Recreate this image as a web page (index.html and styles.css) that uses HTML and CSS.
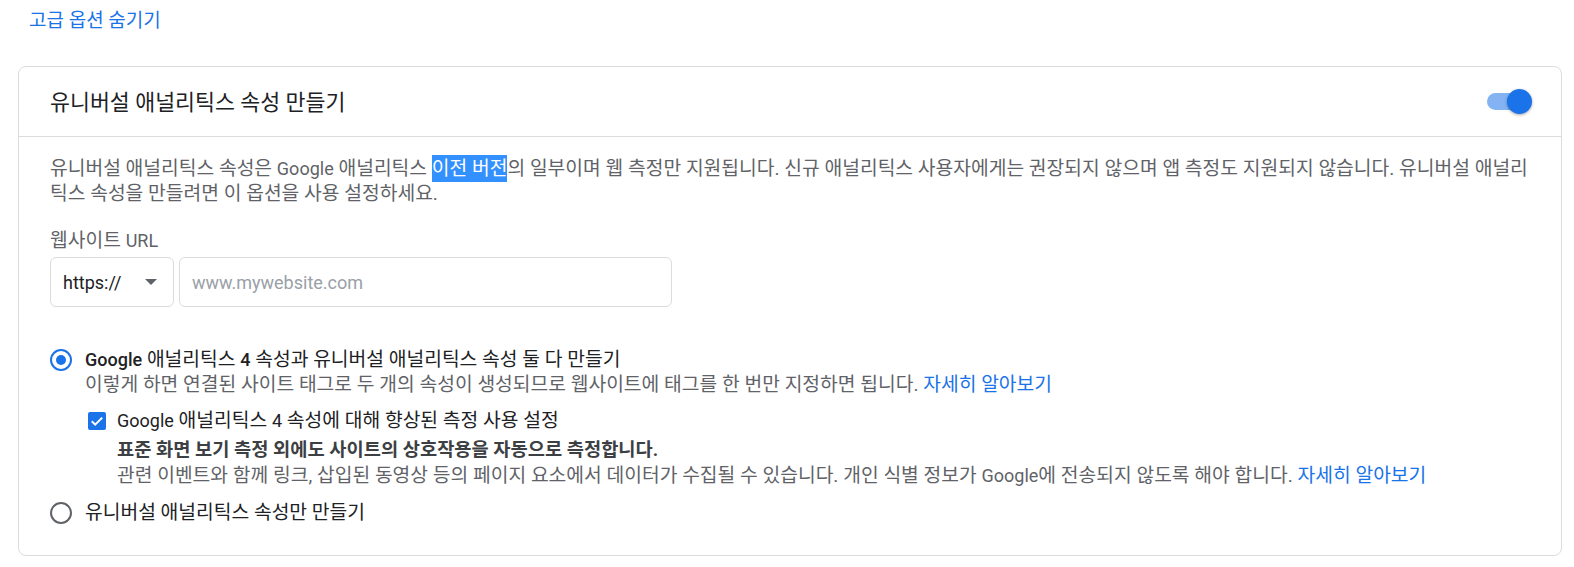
FILE: index.html
```html
<!DOCTYPE html>
<html lang="ko">
<head>
    <meta charset="UTF-8">
    <meta name="viewport" content="width=device-width, initial-scale=1.0">
    <title>유니버설 애널리틱스 속성 만들기</title>
    <link rel="stylesheet" href="styles.css">
</head>
<body>

    <a class="toggle-link" href="#">고급 옵션 숨기기</a>

    <section class="card">
        <header class="card-head">
            <h2 class="card-title">유니버설 애널리틱스 속성 만들기</h2>
            <span class="switch"><span class="switch-track"></span><span class="switch-thumb"></span></span>
        </header>

        <div class="card-body">
            <p class="intro">유니버설 애널리틱스 속성은 <span class="en">Google</span> 애널리틱스 <span class="sel">이전 버전</span>의 일부이며 웹 측정만 지원됩니다. 신규 애널리틱스 사용자에게는 권장되지 않으며 앱 측정도 지원되지 않습니다. 유니버설 애널리틱스 속성을 만들려면 이 옵션을 사용 설정하세요.</p>

            <label class="field-label">웹사이트 <span class="en">URL</span></label>
            <div class="url-row">
                <div class="protocol"><span class="en">https://</span><span class="caret"></span></div>
                <input class="url-input" type="text" placeholder="www.mywebsite.com">
            </div>

            <!-- property options -->
            <div class="options">
                <div class="option">
                    <span class="radio checked"></span>
                    <div class="option-body">
                        <div class="option-label"><span class="en medium">Google</span> 애널리틱스 <span class="en medium">4</span> 속성과 유니버설 애널리틱스 속성 둘 다 만들기</div>
                        <div class="option-hint">이렇게 하면 연결된 사이트 태그로 두 개의 속성이 생성되므로 웹사이트에 태그를 한 번만 지정하면 됩니다. <a href="#">자세히 알아보기</a></div>

                        <div class="check-row">
                            <span class="checkbox">
                                <svg width="18" height="18" viewBox="0 0 18 18"><path d="M3.8 9.2l3.4 3.4 7-7" fill="none" stroke="#fff" stroke-width="2"/></svg>
                            </span>
                            <div class="check-text">
                                <div class="check-label"><span class="en">Google</span> 애널리틱스 <span class="en">4</span> 속성에 대해 향상된 측정 사용 설정</div>
                                <div class="check-strong">표준 화면 보기 측정 외에도 사이트의 상호작용을 자동으로 측정합니다.</div>
                                <div class="check-hint">관련 이벤트와 함께 링크, 삽입된 동영상 등의 페이지 요소에서 데이터가 수집될 수 있습니다. 개인 식별 정보가 <span class="en">Google</span>에 전송되지 않도록 해야 합니다. <a href="#">자세히 알아보기</a></div>
                            </div>
                        </div>
                    </div>
                </div>

                <div class="option second">
                    <span class="radio"></span>
                    <div class="option-body">
                        <div class="option-label">유니버설 애널리틱스 속성만 만들기</div>
                    </div>
                </div>
            </div>
        </div>
    </section>

</body>
</html>
```

FILE: styles.css
```css
body {
    margin: 0;
    padding: 11px 12px 0 18px;
    font-family: Roboto, "Noto Sans CJK KR", sans-serif;
    font-size: 19.25px;
    color: #202124;
}
a {
    color: #1a73e8;
    text-decoration: none;
}
.en {
    font-size: 18px;
}
.medium {
    font-weight: 500;
}
.toggle-link {
    display: block;
    width: max-content;
    margin-left: 11px;
    font-size: 19px;
    line-height: 20px;
}
.card {
    margin-top: 35px;
    border: 1px solid #dadce0;
    border-radius: 8px;
}
.card-head {
    display: flex;
    align-items: center;
    justify-content: space-between;
    height: 69px;
    padding: 0 29px 0 31px;
    border-bottom: 1px solid #dadce0;
}
.card-title {
    margin: 0 0 2px;
    font-size: 21.7px;
    font-weight: 400;
    color: #202124;
}
.switch {
    position: relative;
    width: 45px;
    height: 25px;
}
.switch-track {
    position: absolute;
    left: 0;
    top: 4px;
    width: 36px;
    height: 17px;
    border-radius: 9px;
    background: #83b3f3;
}
.switch-thumb {
    position: absolute;
    right: 0;
    top: 0;
    width: 25px;
    height: 25px;
    border-radius: 50%;
    background: #1a73e8;
    box-shadow: 0 1px 3px rgba(0, 0, 0, 0.35);
}
.card-body {
    padding: 19px 29px 30px 31px;
}
.intro {
    margin: 0;
    line-height: 25px;
    color: #5f6368;
}
.sel {
    background: #3390ff;
    color: #fff;
    padding: 2px 0;
}
.field-label {
    display: block;
    margin-top: 22px;
    line-height: 25px;
    color: #5f6368;
}
.url-row {
    display: flex;
    gap: 5px;
    margin-top: 4px;
}
.protocol {
    display: flex;
    align-items: center;
    justify-content: space-between;
    box-sizing: border-box;
    width: 124px;
    height: 50px;
    padding: 0 16px 0 12px;
    border: 1px solid #dadce0;
    border-radius: 6px;
    color: #202124;
}
.caret {
    width: 0;
    height: 0;
    border-left: 6px solid transparent;
    border-right: 6px solid transparent;
    border-top: 6px solid #5f6368;
}
.url-input {
    box-sizing: border-box;
    width: 493px;
    height: 50px;
    padding: 0 12px;
    border: 1px solid #dadce0;
    border-radius: 6px;
    font-family: Roboto, sans-serif;
    font-size: 18px;
    color: #202124;
    outline: none;
}
.url-input::placeholder {
    color: #9aa0a6;
}
.options {
    margin-top: 40px;
}
.option {
    display: grid;
    grid-template-columns: 35px 1fr;
    line-height: 25px;
}
.option.second {
    margin-top: 12px;
}
.radio {
    display: grid;
    place-items: center;
    box-sizing: border-box;
    width: 22px;
    height: 22px;
    margin-top: 1.5px;
    border: 2px solid #5f6368;
    border-radius: 50%;
}
.radio.checked {
    border-color: #1a73e8;
}
.radio.checked::after {
    content: "";
    width: 10px;
    height: 10px;
    border-radius: 50%;
    background: #1a73e8;
}
.option-label {
    color: #202124;
}
.option-hint {
    color: #5f6368;
}
.check-row {
    display: grid;
    grid-template-columns: 32px 1fr;
    margin-top: 11px;
}
.checkbox {
    display: block;
    width: 18px;
    height: 18px;
    margin: 3.5px 0 0 3px;
    border-radius: 2px;
    background: #1a73e8;
}
.checkbox svg {
    display: block;
}
.check-label {
    color: #202124;
}
.check-strong {
    margin-top: 5px;
    font-size: 18.7px;
    font-weight: 700;
    color: #3c4043;
}
.check-hint {
    color: #5f6368;
}
```
